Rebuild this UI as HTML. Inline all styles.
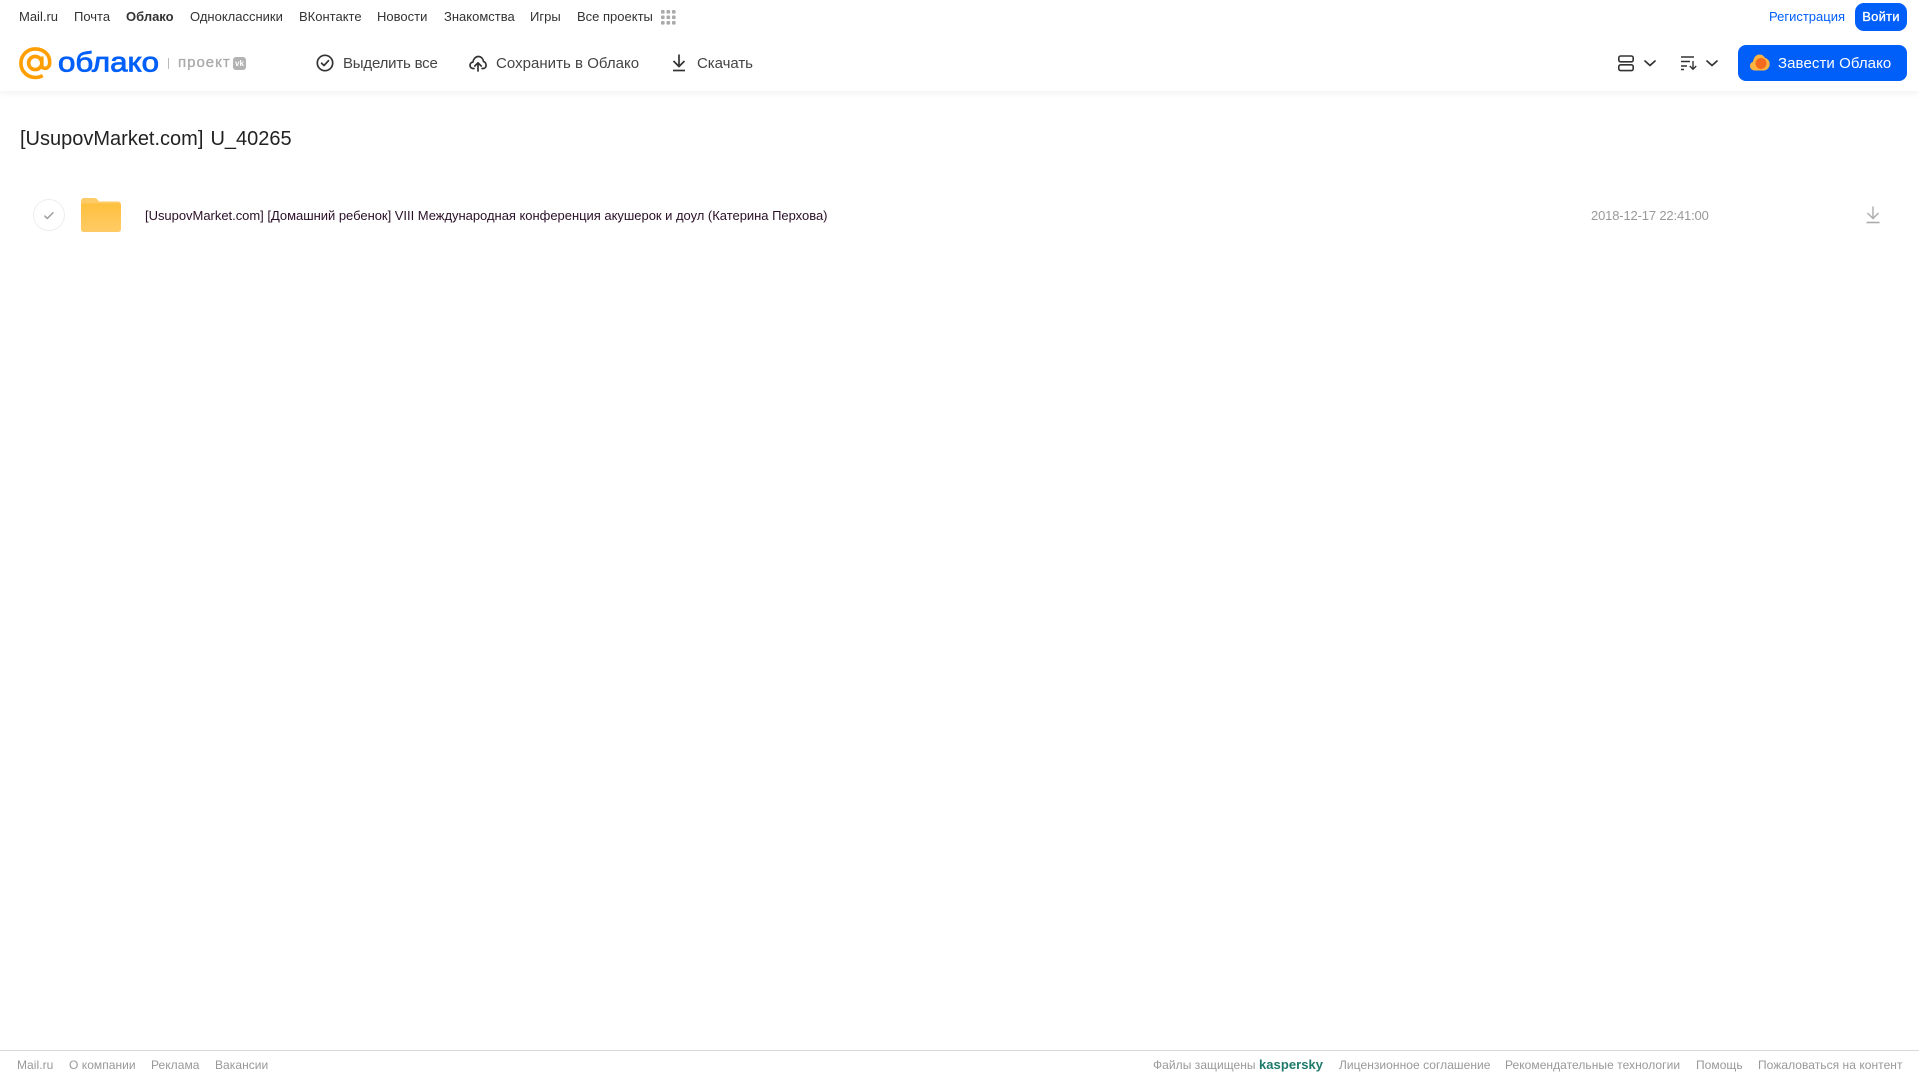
<!DOCTYPE html>
<html lang="ru"><head><meta charset="utf-8"><title>Облако</title>
<style>
html,body{margin:0;padding:0;background:#fff}
body{width:1919px;height:1079px;position:relative;overflow:hidden;font-family:"Liberation Sans",Arial,sans-serif}
.t{position:absolute;white-space:nowrap;line-height:16px}
.n{top:9px;font-size:13px;color:#333}
.a{top:56px;font-size:15px;color:#444}
.f{top:1057px;font-size:12px;color:#999;letter-spacing:.05px}
svg{position:absolute;overflow:visible}
</style></head><body>
<div style="position:absolute;left:0;top:0;width:1919px;height:91px;background:#fff;box-shadow:0 1px 8px rgba(0,0,0,.07)"></div>
<span class="t n" style="left:19px">Mail.ru</span>
<span class="t n" style="left:74px">Почта</span>
<span class="t n" style="left:126px;font-weight:700">Облако</span>
<span class="t n" style="left:190px">Одноклассники</span>
<span class="t n" style="left:299px">ВКонтакте</span>
<span class="t n" style="left:377px">Новости</span>
<span class="t n" style="left:444px">Знакомства</span>
<span class="t n" style="left:530px">Игры</span>
<span class="t n" style="left:577px">Все проекты</span>
<svg style="left:661px;top:10px" width="15" height="15" fill="#aaa"><rect x="0" y="0" width="3.6" height="3.6" rx="1"/><rect x="5.5" y="0" width="3.6" height="3.6" rx="1"/><rect x="11" y="0" width="3.6" height="3.6" rx="1"/><rect x="0" y="5.5" width="3.6" height="3.6" rx="1"/><rect x="5.5" y="5.5" width="3.6" height="3.6" rx="1"/><rect x="11" y="5.5" width="3.6" height="3.6" rx="1"/><rect x="0" y="11" width="3.6" height="3.6" rx="1"/><rect x="5.5" y="11" width="3.6" height="3.6" rx="1"/><rect x="11" y="11" width="3.6" height="3.6" rx="1"/></svg>
<span class="t n" style="left:1769px;color:#005ff9">Регистрация</span>
<div style="position:absolute;left:1855px;top:3px;width:52px;height:28px;border-radius:9px;background:#005ff9;color:#fff;font-size:13px;line-height:27px;text-align:center;-webkit-text-stroke:.3px #fff;letter-spacing:.2px">Войти</div>

<svg style="left:19px;top:47px" width="33" height="33" viewBox="0 0 33 33" fill="none" stroke="#ff9e00" stroke-width="3.6"><circle cx="16.2" cy="16" r="6.6"/><path d="M22.8 9.5v8.5c0 5 7.7 4.6 7.9-2.2C31 7.400 24.500 1.900 16.300 1.900 8.300 1.900 1.900 8.300 1.900 16.200s6.400 14.300 14.300 14.300c3 0 5.400-.7 7.500-2"/></svg>
<svg style="left:56px;top:44px" width="106" height="36"><text x="2" y="27.500" font-family="Liberation Sans" font-size="28" fill="#005ff9" stroke="#005ff9" stroke-width=".8" textLength="101" lengthAdjust="spacingAndGlyphs">облако</text></svg>
<div style="position:absolute;left:168px;top:58px;width:1px;height:11px;background:#bbb"></div>
<span class="t" style="left:178px;top:55px;font-size:15px;color:#aaa;letter-spacing:1px;-webkit-text-stroke:.35px #aaa">проект</span>
<div style="position:absolute;left:233px;top:57px;width:13px;height:13px;border-radius:3px;background:#b3b3b3;color:#fff;font-size:8px;font-weight:700;line-height:13px;text-align:center">vk</div>

<svg style="left:316px;top:54px" width="18" height="18" viewBox="0 0 18 18" fill="none" stroke="#333" stroke-width="1.7"><circle cx="9" cy="9" r="7.7"/><path d="M5.600 9.200l2.400 2.300 4.500-4.800" stroke-linecap="round" stroke-linejoin="round"/></svg>
<span class="t a" style="left:343px;letter-spacing:-.2px">Выделить все</span>
<svg style="left:469px;top:54px" width="18" height="18" viewBox="0 0 18 18" fill="none" stroke="#333" stroke-width="1.7" stroke-linecap="round" stroke-linejoin="round"><path d="M5 14.500H4.200C2.200 14.500 1 13 1 11.300c0-1.700 1.200-3 2.900-3.200C4.300 5.100 6.500 2.500 9.300 2.500c2.800 0 4.800 2.200 5.200 5 1.500.4 2.600 1.900 2.600 3.700 0 1.800-1.300 3.300-3.100 3.300H13"/><path d="M9 17V9M5.800 12L9 8.800 12.200 12"/></svg>
<span class="t a" style="left:496px;letter-spacing:.03px">Сохранить в Облако</span>
<svg style="left:671px;top:54px" width="16" height="18" viewBox="0 0 16 18" fill="none" stroke="#333" stroke-width="1.700"><path d="M8 0.500V12M2.500 7l5.500 5.500L13.500 7"/><path d="M2 16.500h12"/></svg>
<span class="t a" style="left:697px;letter-spacing:-.05px">Скачать</span>

<svg style="left:1618px;top:55px" width="16" height="17" viewBox="0 0 16 17" fill="none" stroke="#333" stroke-width="1.600"><rect x=".8" y="1" width="14.400" height="5.800" rx="1.800"/><rect x=".8" y="9.800" width="14.400" height="5.800" rx="1.800"/></svg>
<svg style="left:1644px;top:60px" width="12" height="7" fill="none" stroke="#333" stroke-width="1.700" stroke-linecap="round" stroke-linejoin="round"><path d="M1 1l5 4.500L11 1"/></svg>
<svg style="left:1681px;top:56px" width="17" height="14" fill="none" stroke="#333" stroke-width="1.400"><path d="M0 1h13M0 5.500h9M0 10h6M0 13.500h3"/><path d="M12 5v8M8.800 10l3.200 3.300 3.200-3.300"/></svg>
<svg style="left:1706px;top:60px" width="12" height="7" fill="none" stroke="#333" stroke-width="1.700" stroke-linecap="round" stroke-linejoin="round"><path d="M1 1l5 4.500L11 1"/></svg>
<div style="position:absolute;left:1738px;top:45px;width:169px;height:36px;border-radius:8px;background:#005ff9"></div>
<svg style="left:1750px;top:54px" width="20" height="17"><path d="M5 16.500C2 16.500 0 14.500 0 12c0-2 1.200-3.600 3-4.200C3.500 3.500 6.200 0.500 9.500 0.500c2.500 0 4.500 1.400 5.500 3.500 2.800.6 4.700 3 4.700 6 0 3.600-2.800 6.500-6 6.500z" fill="#ffb341"/><circle cx="11" cy="9.500" r="5.500" fill="#f56a1f"/></svg>
<span class="t" style="left:1778px;top:56px;font-size:15px;color:#fff;letter-spacing:.08px">Завести Облако</span>

<span class="t" style="left:20px;top:127px;font-size:20px;line-height:24px;color:#222;word-spacing:1.500px">[UsupovMarket.com] U_40265</span>

<div style="position:absolute;left:33px;top:199px;width:30px;height:30px;border:1px solid #eee;border-radius:50%"></div>
<svg style="left:44px;top:212px" width="10" height="8" fill="none" stroke="#999" stroke-width="1.400" stroke-linecap="round" stroke-linejoin="round"><path d="M.8 4l2.500 2.500L9 .8"/></svg>
<svg style="left:81px;top:198px" width="40" height="34" viewBox="0 0 40 34"><defs><linearGradient id="g" x1="0" y1="0" x2="0" y2="1"><stop offset="0" stop-color="#ffc03e"/><stop offset="1" stop-color="#ffcb66"/></linearGradient></defs><path d="M3 0h10c2 0 3 .8 4 2.200l1 1.300h19a3 3 0 0 1 3 3V31a3 3 0 0 1-3 3H3a3 3 0 0 1-3-3V3a3 3 0 0 1 3-3z" fill="#ffcb66"/><path d="M2 5.500h36a2 2 0 0 1 2 2V31a3 3 0 0 1-3 3H3a3 3 0 0 1-3-3V7.500a2 2 0 0 1 2-2z" fill="url(#g)"/></svg>
<span class="t" style="left:145px;top:208px;font-size:13px;color:#2a1028;letter-spacing:-.024px">[UsupovMarket.com] [Домашний ребенок] VIII Международная конференция акушерок и доул (Катерина Перхова)</span>
<span class="t" style="left:1591px;top:208px;font-size:13px;color:#999;letter-spacing:-.16px">2018-12-17 22:41:00</span>
<svg style="left:1866px;top:206px" width="14" height="18" fill="none" stroke="#aaa" stroke-width="1.400"><path d="M7 0.500V12M1.500 7L7 12.500 12.500 7"/><path d="M0.500 16.500h13" stroke-width="1.600"/></svg>

<div style="position:absolute;left:0;top:1050px;width:1919px;height:1px;background:#d9d9d9"></div>
<span class="t f" style="left:17px">Mail.ru</span>
<span class="t f" style="left:69px">О компании</span>
<span class="t f" style="left:151px">Реклама</span>
<span class="t f" style="left:215px">Вакансии</span>
<span class="t f" style="left:1153px">Файлы защищены</span>
<span class="t f" style="left:1259px;font-size:13px;font-weight:700;color:#1d7a6a">kaspersky</span>
<span class="t f" style="left:1339px">Лицензионное соглашение</span>
<span class="t f" style="left:1505px">Рекомендательные технологии</span>
<span class="t f" style="left:1696px">Помощь</span>
<span class="t f" style="left:1758px">Пожаловаться на контент</span>
</body></html>
